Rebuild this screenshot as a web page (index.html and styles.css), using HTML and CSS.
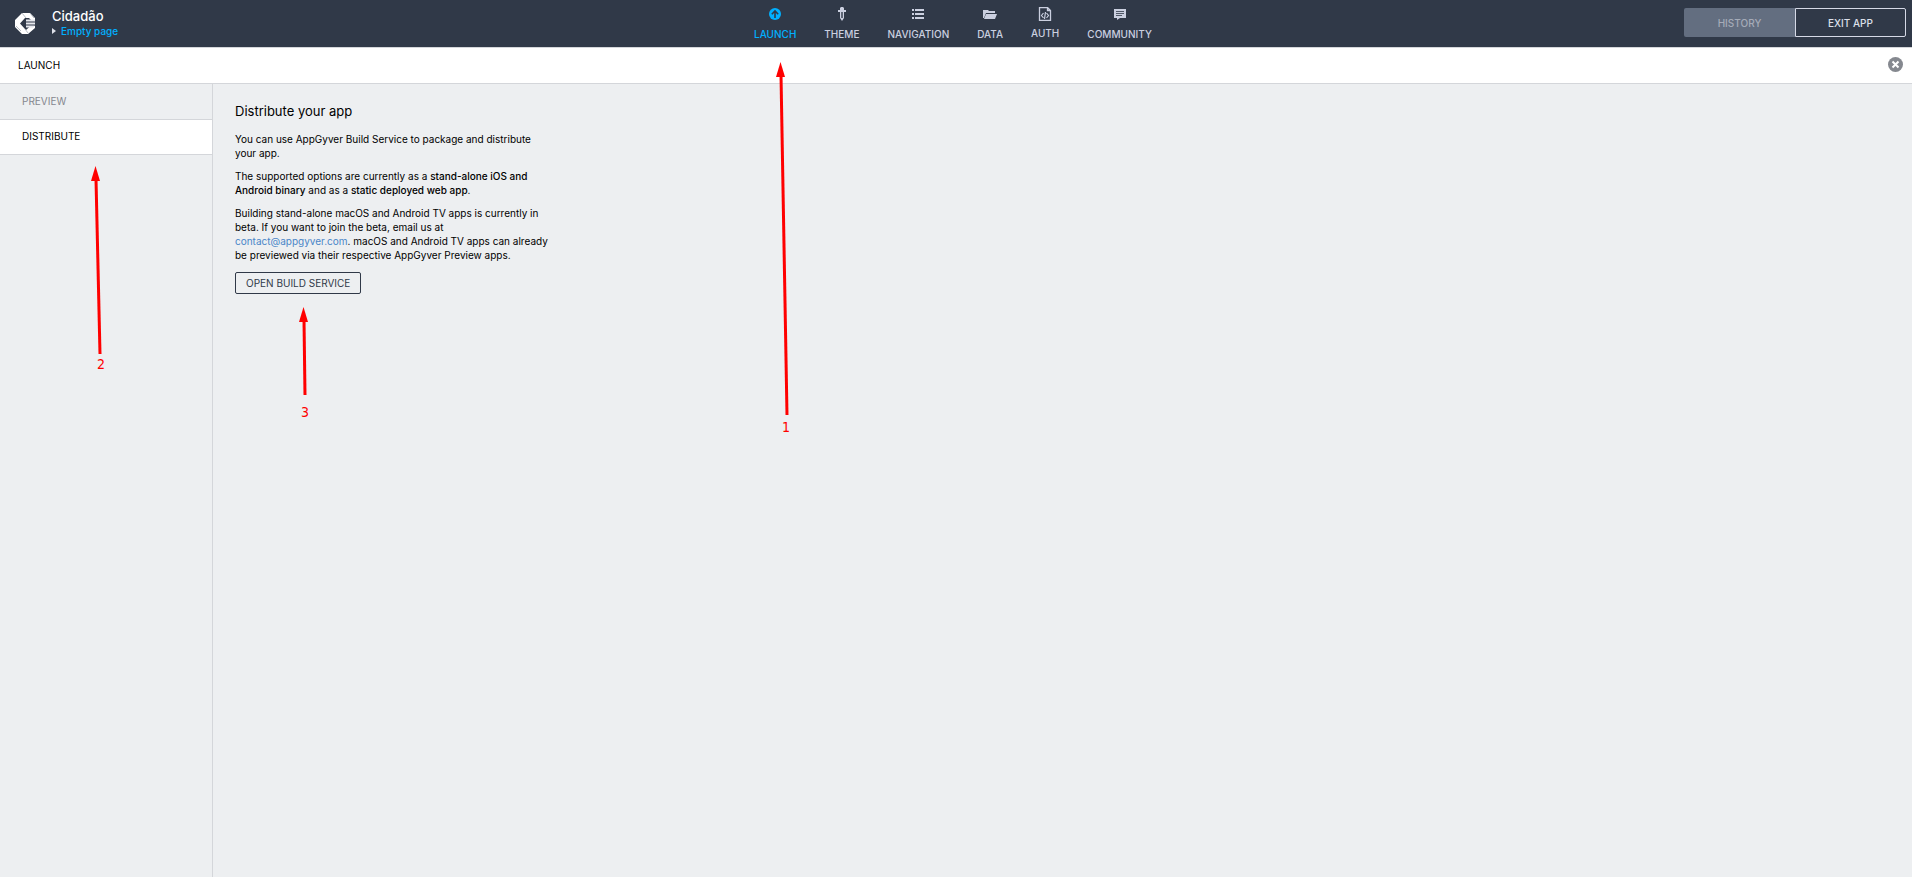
FILE: index.html
```html
<!DOCTYPE html>
<html lang="en">
<head>
<meta charset="UTF-8">
<meta name="viewport" content="width=device-width, initial-scale=1.0">
<title>Cidadão</title>
<link rel="stylesheet" href="styles.css">
</head>
<body>
<header class="topbar">
  <div class="brand">
    <svg class="logo" viewBox="0 0 20 21" aria-hidden="true">
      <path d="M7 0h8l5 5v2h-4l-2-2h-4l-5 5.500 5 5.500 1 1 4.500-4H20v2l-7 6H7l-7-7V7z" fill="#fff"/>
      <path d="M11 6.500h9v2h-9zM11 9.500h9v2h-9zM11 12.500h9l-2 2h-7z" fill="#e6e8ed"/>
      <path d="M7 0l4 5M1 13l5 5M15 0l4 5M10 16l3 4" stroke="#9aa0ab" stroke-width=".7" fill="none"/>
    </svg>
    <div>
      <div class="app-name">Cidadão</div>
      <a class="page-link" href="#">Empty page</a>
    </div>
  </div>

  <nav class="main-nav">
    <a class="nav-item active" href="#">
      <svg viewBox="0 0 14 14"><circle cx="7" cy="7" r="6" fill="currentColor"/><path d="M7 11V4M3.8 7.2L7 4l3.2 3.2" fill="none" stroke="#303948" stroke-width="1.6"/></svg>
      <span>LAUNCH</span>
    </a>
    <a class="nav-item" href="#">
      <svg viewBox="0 0 14 14"><path d="M6 0h2l1 1v2h2v2H9v6l-2 3-2-3V5H3V3h2V1z" fill="currentColor"/><path d="M7 5v6" stroke="#303948" stroke-width="1.4"/></svg>
      <span>THEME</span>
    </a>
    <a class="nav-item" href="#">
      <svg viewBox="0 0 14 14"><path d="M1 2h2v2H1zM1 6h2v2H1zM1 10h2v2H1zM4 2h9v2H4zM4 6h9v2H4zM4 10h9v2H4z" fill="currentColor"/></svg>
      <span>NAVIGATION</span>
    </a>
    <a class="nav-item" href="#">
      <svg viewBox="0 0 14 14"><path d="M0 3h5l1 1h6v2H3L1 11H0z" fill="currentColor"/><path d="M3 7h11l-2 5H1z" fill="currentColor"/></svg>
      <span>DATA</span>
    </a>
    <a class="nav-item auth" href="#">
      <svg viewBox="0 0 14 14"><path d="M1.5.5h8l3 3v10h-11zM9.5.5v3h3" fill="none" stroke="currentColor" stroke-width="1.3"/><path d="M5.500 6L3.500 8.500l2 2.500M8.500 6l2 2.500-2 2.500M7.500 5l-1 7" fill="none" stroke="currentColor" stroke-width="1.2"/></svg>
      <span>AUTH</span>
    </a>
    <a class="nav-item" href="#">
      <svg viewBox="0 0 14 14"><path d="M1 2h12v9H7l-3 2v-2H1z" fill="currentColor"/><path d="M3 4.500h8M3 6.500h8M3 8.500h6" stroke="#303948" stroke-width=".8"/></svg>
      <span>COMMUNITY</span>
    </a>
  </nav>

  <div class="actions">
    <button class="btn-history" type="button" disabled>HISTORY</button>
    <button class="btn-exit" type="button">EXIT APP</button>
  </div>
</header>

<div class="titlebar">
  <span>LAUNCH</span>
  <button class="close" type="button" aria-label="Close">
    <svg viewBox="0 0 15 15"><circle cx="7.500" cy="7.500" r="7.500" fill="#85888f"/><path d="M4.500 4.500l6 6M10.500 4.500l-6 6" stroke="#fff" stroke-width="2"/></svg>
  </button>
</div>

<div class="layout">
  <aside class="sidebar">
    <a class="side-item" href="#">PREVIEW</a>
    <a class="side-item selected" href="#">DISTRIBUTE</a>
  </aside>
  <main class="content">
    <h1>Distribute your app</h1>
    <p>You can use AppGyver Build Service to package and distribute your app.</p>
    <p>The supported options are currently as a <b>stand-alone iOS and Android binary</b> and as a <b>static deployed web app</b>.</p>
    <p>Building stand-alone macOS and Android TV apps is currently in beta. If you want to join the beta, email us at <a href="mailto:contact@appgyver.com">contact@appgyver.com</a>. macOS and Android TV apps can already be previewed via their respective AppGyver Preview apps.</p>
    <button class="btn-build" type="button">OPEN BUILD SERVICE</button>
  </main>
</div>

<!-- numbered steps drawn over the page -->
<div class="step step-1">
  <svg width="16" height="354" viewBox="0 0 16 354"><path d="M5 13l6 340" stroke="red" stroke-width="3"/><path d="M4.500 0L9 15H0z" fill="red"/></svg>
  <span>1</span>
</div>
<div class="step step-2">
  <svg width="16" height="188" viewBox="0 0 16 188"><path d="M5 13l4 175" stroke="red" stroke-width="3"/><path d="M4.500 0L9 15H0z" fill="red"/></svg>
  <span>2</span>
</div>
<div class="step step-3">
  <svg width="16" height="88" viewBox="0 0 16 88"><path d="M5 13l1 75" stroke="red" stroke-width="3"/><path d="M4.500 0L9 15H0z" fill="red"/></svg>
  <span>3</span>
</div>
</body>
</html>
```
FILE: styles.css
```css
* {
  box-sizing: border-box;
}
body {
  margin: 0;
  min-height: 100vh;
  display: flex;
  flex-direction: column;
  background: #edeff1;
  color: #000;
  font-family: Inter, "Liberation Sans", sans-serif;
  font-size: 10px;
  line-height: 14px;
}
a {
  text-decoration: none;
}
button {
  font: inherit;
  cursor: pointer;
}

/* top bar */
.topbar {
  display: grid;
  grid-template-columns: 1fr auto 1fr;
  align-items: center;
  height: 48px;
  padding-right: 6px;
  background: #303948;
  border-bottom: 1px solid #d4d6da;
}
.brand {
  display: flex;
  align-items: center;
  gap: 17px;
  padding: 0 0 1px 15px;
}
.logo {
  width: 20px;
  height: 21px;
}
.app-name {
  color: #fff;
  font-size: 13px;
  font-weight: 500;
  line-height: 16px;
}
.page-link {
  display: flex;
  align-items: center;
  gap: 5px;
  color: #00b0ff;
  font-weight: 500;
}
.page-link::before {
  content: "";
  border: 3px solid transparent;
  border-left: 4px solid #dde0e8;
  border-right: 0;
}
.main-nav {
  display: flex;
  gap: 28px;
}
.nav-item {
  display: flex;
  flex-direction: column;
  align-items: center;
  gap: 6px;
  color: #cbd0e0;
  font-weight: 500;
}
.nav-item svg {
  width: 14px;
  height: 14px;
}
.nav-item.active {
  color: #00b0ff;
}
.nav-item.auth {
  gap: 5px;
}
.actions {
  display: flex;
  justify-content: flex-end;
  padding-bottom: 2px;
}
.actions button {
  width: 111px;
  height: 29px;
  padding: 0;
  font-weight: 500;
}
.actions .btn-history {
  background: #636e80;
  border: 0;
  border-radius: 2px 0 0 2px;
  color: #a5abb8;
}
.actions .btn-exit {
  background: none;
  border: 1px solid #d5d9e6;
  border-radius: 0 2px 2px 0;
  color: #dde0ea;
}

/* panel title */
.titlebar {
  display: flex;
  align-items: center;
  justify-content: space-between;
  height: 36px;
  padding: 0 9px 2px 18px;
  background: #fff;
  border-bottom: 1px solid #d4d6da;
}
.close {
  display: flex;
  padding: 0;
  background: none;
  border: 0;
}
.close svg {
  width: 15px;
  height: 15px;
}

.layout {
  display: flex;
  flex: 1;
}
.sidebar {
  width: 213px;
  border-right: 1px solid #d4d6da;
}
.side-item {
  display: flex;
  align-items: center;
  height: 36px;
  padding: 0 0 2px 22px;
  border-bottom: 1px solid #d4d6da;
  color: #85888f;
}
.side-item.selected {
  height: 35px;
  background: #fff;
  color: #000;
}

.content {
  max-width: 358px;
  padding: 19px 22px;
}
.content h1 {
  margin: 0 0 13px;
  font-size: 13px;
  font-weight: 400;
  line-height: 16px;
}
.content p {
  margin: 0 0 9px;
}
.content b {
  font-weight: 500;
}
.content a {
  color: #4a86c8;
}
.btn-build {
  height: 22px;
  margin-top: 1px;
  padding: 0 10px;
  background: none;
  border: 1px solid #303948;
  border-radius: 2px;
  color: #303948;
}

/* steps */
.step {
  position: absolute;
  display: flex;
  flex-direction: column;
  gap: 4px;
  color: red;
  font-family: "DejaVu Sans Condensed", "DejaVu Sans", sans-serif;
  font-size: 14px;
  pointer-events: none;
}
.step span {
  padding-left: 6px;
}
.step-1 {
  left: 776px;
  top: 62px;
}
.step-2 {
  left: 91px;
  top: 166px;
  gap: 3px;
}
.step-3 {
  left: 299px;
  top: 307px;
  gap: 10px;
}
.step-3 span {
  padding-left: 2px;
}
```
